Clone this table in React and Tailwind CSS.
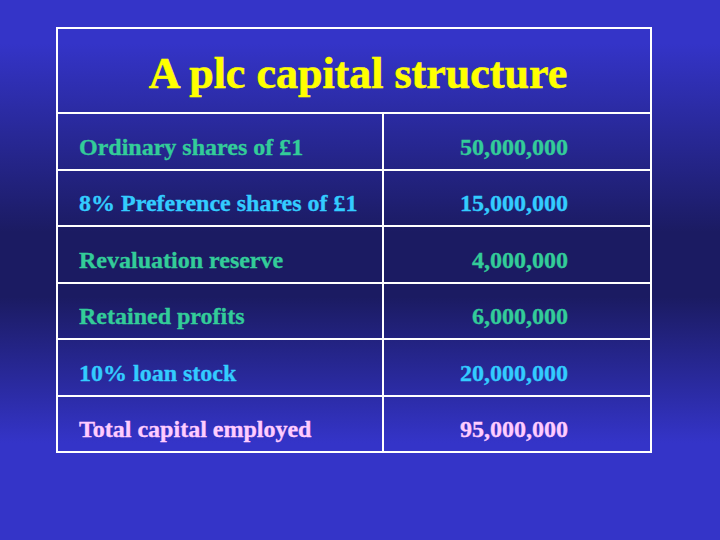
const rows = [
  { label: 'Ordinary shares of £1', value: '50,000,000', color: 'text-[#33cc99]', h: 'h-[57px]' },
  { label: '8% Preference shares of £1', value: '15,000,000', color: 'text-[#33ccff]', h: 'h-[56px]' },
  { label: 'Revaluation reserve', value: '4,000,000', color: 'text-[#33cc99]', h: 'h-[57px]' },
  { label: 'Retained profits', value: '6,000,000', color: 'text-[#33cc99]', h: 'h-[56px]' },
  { label: '10% loan stock', value: '20,000,000', color: 'text-[#33ccff]', h: 'h-[57px]' },
  { label: 'Total capital employed', value: '95,000,000', color: 'text-[#ffccff]', h: 'h-[54px]' },
];

export default function App() {
  return (
    <div
      className="w-[720px] h-[540px] pt-[27px] pl-[56px] bg-[linear-gradient(to_bottom,#3434c8_8%,#1b1b62_43%,#1b1b62_55%,#3434c8_82%)] font-bold"
      style={{ fontFamily: '"Liberation Serif", "Times New Roman", serif' }}
    >
      <div className="w-[596px] border-2 border-white">
        {/* Title */}
        <div className="h-[85px] flex items-center justify-center pt-[7px] border-b-2 border-white">
          <h1 className="text-[44px] leading-none text-[#ffff00] pl-[8px] [-webkit-text-stroke:0.6px_#ffff00]">
            A plc capital structure
          </h1>
        </div>

        {/* Rows */}
        {rows.map((row, i) => (
          <div
            key={row.label}
            className={`grid grid-cols-[326px_1fr] ${row.h} ${
              i < rows.length - 1 ? 'border-b-2 border-white' : ''
            } ${row.color} [-webkit-text-stroke:0.35px_currentColor]`}
          >
            <div className="flex items-center pt-[10px] pl-[21px] border-r-2 border-white text-[24px] leading-none">
              {row.label}
            </div>
            <div className="flex items-center justify-end pt-[10px] pr-[82px] text-[24px] leading-none">
              {row.value}
            </div>
          </div>
        ))}
      </div>
    </div>
  );
}
